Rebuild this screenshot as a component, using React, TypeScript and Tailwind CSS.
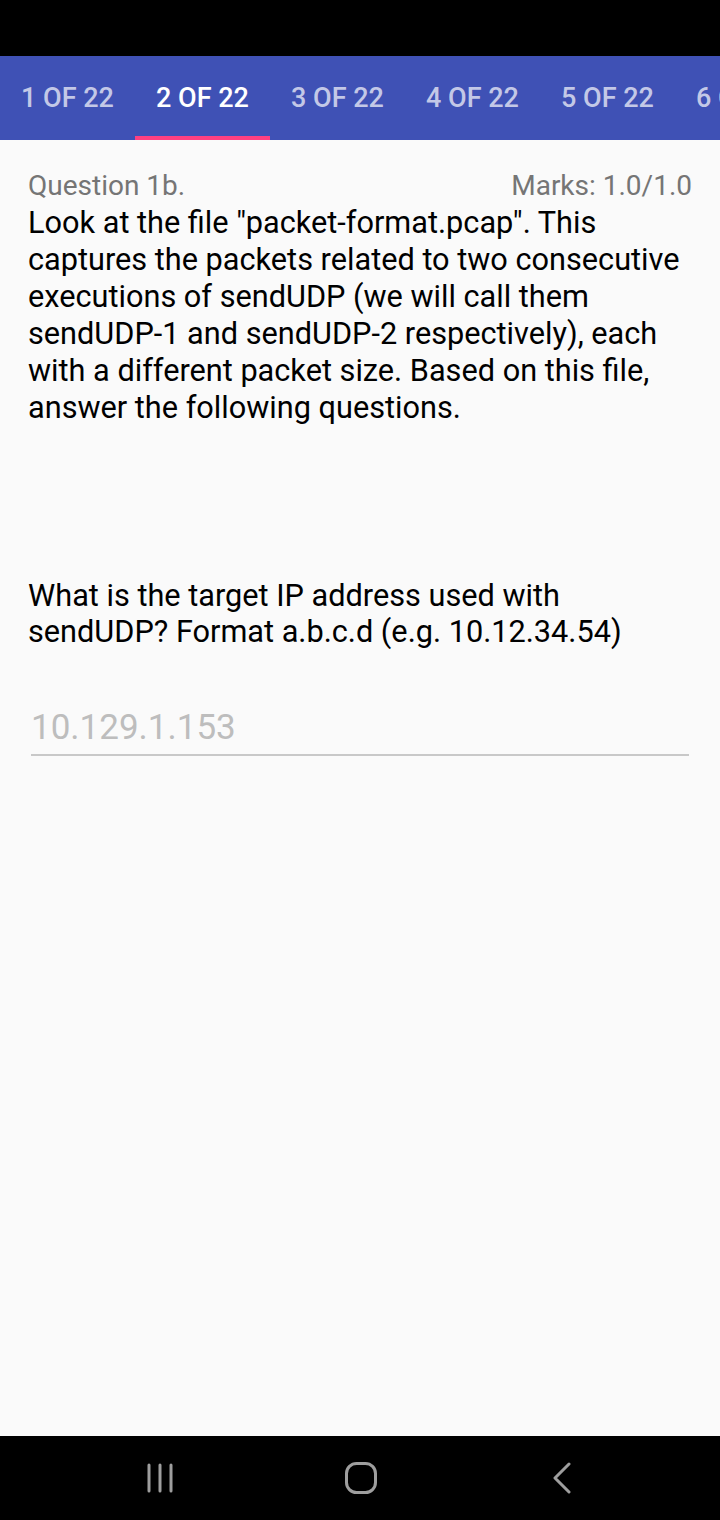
import React from "react";

const tabs = ["1 OF 22", "2 OF 22", "3 OF 22", "4 OF 22", "5 OF 22", "6 OF 22"];

export default function App() {
  const active = 1;

  return (
    <div
      className="w-[720px] h-[1520px] flex flex-col bg-[#fafafa] overflow-hidden"
      style={{ fontFamily: "Roboto, 'Noto Sans', sans-serif" }}
    >
      {/* status bar */}
      <div className="h-[56px] bg-black shrink-0" />

      {/* question tabs, last one runs off the right edge */}
      <div className="h-[84px] bg-[#3f51b5] flex shrink-0 overflow-hidden">
        {tabs.map((t, i) => (
          <div
            key={t}
            className={
              "w-[135px] shrink-0 flex flex-col items-center justify-between " +
              (i === active ? "text-white" : "text-white/70")
            }
          >
            <div className="flex-1 flex items-center pt-[5px] text-[27px] font-medium whitespace-nowrap">
              {t}
            </div>
            <div className={"h-[4px] w-full " + (i === active ? "bg-[#ff4081]" : "")} />
          </div>
        ))}
      </div>

      {/* question body */}
      <div className="flex-1 px-[28px] pt-[28px]">
        <div className="flex justify-between items-baseline text-[#757575] text-[28px] leading-[36px]">
          <span>Question 1b.</span>
          <span>Marks: 1.0/1.0</span>
        </div>
        <p className="text-black text-[30.7px] leading-[37px]">
          Look at the file "packet-format.pcap". This captures the packets related to two consecutive
          executions of sendUDP (we will call them sendUDP-1 and sendUDP-2 respectively), each with a
          different packet size. Based on this file, answer the following questions.
        </p>

        <p className="text-black text-[30.7px] leading-[36px] mt-[152px]">
          What is the target IP address used with sendUDP? Format a.b.c.d (e.g. 10.12.34.54)
        </p>

        <div className="mt-[56px] mx-[3px] border-b-2 border-[#c8c8c8] pb-[4px]">
          <span className="text-[35px] leading-[44px] text-[#bdbdbd]">10.129.1.153</span>
        </div>
      </div>

      {/* navigation bar */}
      <div className="h-[84px] bg-black shrink-0 flex items-center pl-[100px] gap-[81px]">
        <div className="w-[120px] flex justify-center">
          <svg width="28" height="30" viewBox="0 0 28 30" className="text-[#9e9e9e]">
            <g stroke="currentColor" strokeWidth="3" strokeLinecap="round">
              <line x1="3" y1="2" x2="3" y2="28" />
              <line x1="14" y1="2" x2="14" y2="28" />
              <line x1="25" y1="2" x2="25" y2="28" />
            </g>
          </svg>
        </div>
        <div className="w-[120px] flex justify-center">
          <svg width="32" height="32" viewBox="0 0 32 32" className="text-[#9e9e9e]">
            <rect x="1.5" y="1.5" width="29" height="29" rx="10" fill="none" stroke="currentColor" strokeWidth="3" />
          </svg>
        </div>
        <div className="w-[120px] flex justify-center">
          <svg width="20" height="32" viewBox="0 0 20 32" className="text-[#9e9e9e]">
            <polyline points="17,2 3,16 17,30" fill="none" stroke="currentColor" strokeWidth="3" strokeLinecap="round" strokeLinejoin="round" />
          </svg>
        </div>
      </div>
    </div>
  );
}
